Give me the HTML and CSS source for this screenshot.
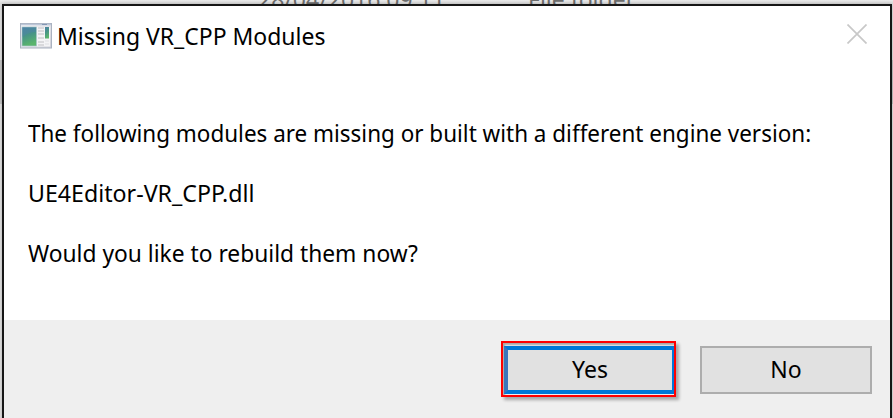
FILE: index.html
```
<!DOCTYPE html>
<html lang="en">
<head>
<meta charset="utf-8">
<title>Missing VR_CPP Modules</title>
<link rel="stylesheet" href="styles.css">
</head>
<body>
<div class="file-row"><span class="file-date">28/04/2016 09:11</span><span class="file-type">File folder</span></div>
<main class="dialog">
  <header class="titlebar">
    <svg class="app-icon" width="32" height="26" viewBox="0 0 32 26">
      <defs>
        <linearGradient id="pane" x1="0" y1="0" x2="0.3" y2="1"><stop offset="0" stop-color="#4d83a5"/><stop offset="0.5" stop-color="#479487"/><stop offset="1" stop-color="#5ab56c"/></linearGradient>
        <linearGradient id="frame" x1="0" y1="0" x2="1" y2="1"><stop offset="0" stop-color="#f5f6f8"/><stop offset="1" stop-color="#cfd0d8"/></linearGradient>
      </defs>
      <rect x="0.5" y="0.5" width="31" height="24.5" fill="url(#frame)" stroke="#aab2c0"/>
      <path d="M1 1.5H31" stroke="#bcc7d8" stroke-width="1.5"/>
      <path d="M22 1.5h5" stroke="#8297b4"/>
      <rect x="2" y="4" width="28" height="19.5" fill="#f4f4f6"/>
      <rect x="2" y="4" width="14.5" height="19" fill="url(#pane)" stroke="#a9c6cb" stroke-width="0.7"/>
      <path d="M2.5 14Q8 9 16 9V4.500H2.500z" fill="#4e82a9" opacity="0.45"/>
      <path d="M18 5h6M18 8h6M18 11h6M18 15h6M18 19h6M18 22h6" stroke="#d0d0d3" stroke-width="1.3"/>
      <rect x="25" y="4" width="4" height="11.500" fill="url(#pane)"/>
      <path d="M25 18h4M25 21h4" stroke="#dedfe3"/>
    </svg>
    <h1 class="title">Missing VR_CPP Modules</h1>
    <svg class="close" width="20" height="20" viewBox="0 0 20 20"><path d="M.5.5l19 19M19.500.5l-19 19" stroke="#c8c8c8" stroke-width="1.7"/></svg>
  </header>
  <section class="message">
    <p class="line intro">The following modules are missing or built with a different engine version:</p>
    <p class="line module">UE4Editor-VR_CPP.dll</p>
    <p class="line question">Would you like to rebuild them now?</p>
  </section>
  <footer class="actions">
    <div class="highlight"><button class="button primary">Yes</button></div>
    <button class="button">No</button>
  </footer>
</main>
</body>
</html>
```
FILE: styles.css
```
* { box-sizing: border-box; }
body {
  margin: 0;
  width: 893px;
  height: 418px;
  overflow: hidden;
  display: flex;
  flex-direction: column;
  background: linear-gradient(#e4e4e4 60px, #c6c6c6 60px, #c6c6c6 104px, #e4e4e4 104px);
  font-family: "Noto Sans", "Open Sans", sans-serif;
  color: #000;
}
.file-row {
  flex: none;
  display: flex;
  height: 4px;
  padding-left: 258px;
  overflow: hidden;
  background: linear-gradient(#ebebeb, #dedede);
  color: #6e6e6e;
  font-size: 23px;
  line-height: 32px;
  white-space: nowrap;
}
.file-row span { margin-top: -17px; }
.file-date { width: 270px; }
.dialog {
  flex: none;
  width: 890px;
  height: 420px;
  margin-left: 2px;
  border: 2px solid #161616;
  background: #fff;
  box-shadow: 0 0 4px rgba(0, 0, 0, 0.25);
}
.titlebar {
  display: flex;
  align-items: center;
  height: 60px;
  padding: 0 23px 0 16px;
}
.app-icon { flex: none; margin-top: -1px; }
.close { flex: none; margin: -4px 0 0 auto; }
.title {
  margin: 0 0 0 5px;
  font-size: 24px;
  font-weight: 400;
  line-height: 32px;
  white-space: nowrap;
  transform: scaleX(0.957);
  transform-origin: 0 50%;
}
.message {
  height: 254px;
  padding: 52px 0 0 24px;
}
.line {
  width: max-content;
  margin: 0 0 30px;
  font-size: 24px;
  line-height: 30px;
  white-space: nowrap;
  transform-origin: 0 50%;
}
.intro { transform: scaleX(0.9355); }
.module { transform: scaleX(0.966); }
.question { transform: scaleX(0.949); }
.actions {
  display: flex;
  align-items: flex-start;
  height: 98px;
  padding: 21px 18px 0 0;
  justify-content: flex-end;
  gap: 24px;
  background: #efefef;
}
.highlight {
  width: 175px;
  height: 56px;
  padding: 3px 0 0 1px;
  border: 2px solid #f00;
  box-shadow: 3px 3px 3px rgba(0, 0, 0, 0.3), inset 2px 2px 2px rgba(0, 0, 0, 0.3);
}
.button {
  width: 172px;
  height: 48px;
  padding: 0 0 2px;
  border: 2px solid #adadad;
  background: #e1e1e1;
  color: #000;
  font: 23px/30px "Noto Sans", "Open Sans", sans-serif;
}
.actions > .button { margin-top: 5px; }
.button.primary {
  display: block;
  width: 170px;
  border: 4px solid #0078d7;
  border-right-width: 2px;
  border-left-color: #3c74ba;
}
```
